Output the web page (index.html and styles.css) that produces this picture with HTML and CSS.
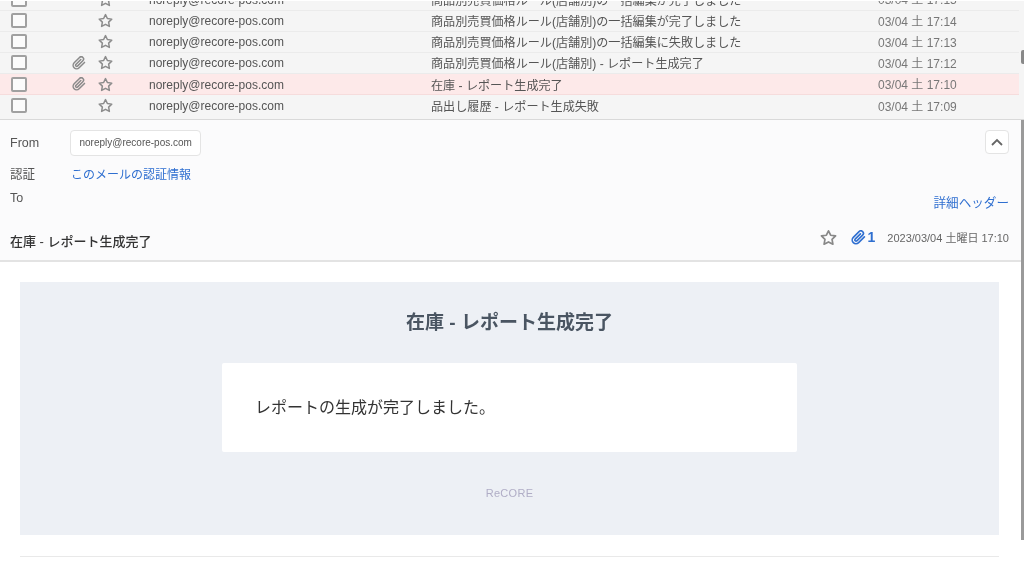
FILE: index.html
```html
<!DOCTYPE html>
<html lang="ja">
<head>
  <meta charset="UTF-8">
  <meta name="viewport" content="width=device-width, initial-scale=1.0">
  <title>Webmail</title>
  <link rel="stylesheet" href="styles.css">
</head>
<body>
  <svg class="sprites" width="0" height="0">
    <symbol id="star" viewBox="0 0 24 24">
      <polygon points="12 2.5 15 8.8 22 9.8 17 14.6 18.2 21.5 12 18.2 5.8 21.5 7 14.6 2 9.8 9 8.8" fill="none" stroke="currentColor" stroke-width="2.4" stroke-linejoin="round"/>
    </symbol>
    <symbol id="clip" viewBox="0 0 24 24">
      <path d="M21.4 11l-9.2 9.2a6 6 0 0 1-8.5-8.5l9.2-9.2a4 4 0 0 1 5.7 5.7l-9.2 9.2a2 2 0 0 1-2.8-2.8l8.5-8.5" fill="none" stroke="currentColor" stroke-width="2.6" stroke-linecap="round" stroke-linejoin="round"/>
    </symbol>
  </svg>

  <div class="page">
    <div class="mail-list">
      <div class="row row-cut">
        <span class="check"></span>
        <span class="clip-cell"></span>
        <svg class="star"><use href="#star"/></svg>
        <span class="sender">noreply@recore-pos.com</span>
        <span class="subject">商品別売買価格ルール(店舗別)の一括編集が完了しました</span>
        <span class="date">03/04 土 17:15</span>
      </div>
      <div class="row">
        <span class="check"></span>
        <span class="clip-cell"></span>
        <svg class="star"><use href="#star"/></svg>
        <span class="sender">noreply@recore-pos.com</span>
        <span class="subject">商品別売買価格ルール(店舗別)の一括編集が完了しました</span>
        <span class="date">03/04 土 17:14</span>
      </div>
      <div class="row">
        <span class="check"></span>
        <span class="clip-cell"></span>
        <svg class="star"><use href="#star"/></svg>
        <span class="sender">noreply@recore-pos.com</span>
        <span class="subject">商品別売買価格ルール(店舗別)の一括編集に失敗しました</span>
        <span class="date">03/04 土 17:13</span>
      </div>
      <div class="row">
        <span class="check"></span>
        <span class="clip-cell"><svg class="clip"><use href="#clip"/></svg></span>
        <svg class="star"><use href="#star"/></svg>
        <span class="sender">noreply@recore-pos.com</span>
        <span class="subject">商品別売買価格ルール(店舗別) - レポート生成完了</span>
        <span class="date">03/04 土 17:12</span>
      </div>
      <div class="row row-active">
        <span class="check"></span>
        <span class="clip-cell"><svg class="clip"><use href="#clip"/></svg></span>
        <svg class="star"><use href="#star"/></svg>
        <span class="sender">noreply@recore-pos.com</span>
        <span class="subject">在庫 - レポート生成完了</span>
        <span class="date">03/04 土 17:10</span>
      </div>
      <div class="row row-last">
        <span class="check"></span>
        <span class="clip-cell"></span>
        <svg class="star"><use href="#star"/></svg>
        <span class="sender">noreply@recore-pos.com</span>
        <span class="subject">品出し履歴 - レポート生成失敗</span>
        <span class="date">03/04 土 17:09</span>
      </div>
      <div class="list-thumb"></div>
    </div>

    <div class="mail-head">
      <div class="head-top">
        <div class="meta">
          <span class="label">From</span>
          <span class="pill">noreply@recore-pos.com</span>
          <span class="label">認証</span>
          <a class="link" href="#">このメールの認証情報</a>
          <span class="label">To</span>
          <span></span>
        </div>
        <div class="head-tools">
          <button class="collapse" type="button">
            <svg width="14" height="9" viewBox="0 0 14 9"><path d="M2 7l5-5 5 5" fill="none" stroke="#666" stroke-width="1.8"/></svg>
          </button>
          <a class="link detail" href="#">詳細ヘッダー</a>
        </div>
      </div>
      <div class="head-bottom">
        <span class="head-subject">在庫 - レポート生成完了</span>
        <svg class="head-star"><use href="#star"/></svg>
        <svg class="head-clip"><use href="#clip"/></svg>
        <span class="clip-count">1</span>
        <span class="head-date">2023/03/04 土曜日 17:10</span>
      </div>
    </div>

    <div class="mail-body">
      <div class="notice">
        <h1 class="notice-title">在庫 - レポート生成完了</h1>
        <div class="notice-box">レポートの生成が完了しました。</div>
        <div class="notice-foot">ReCORE</div>
      </div>
      <hr class="body-rule">
    </div>
    <div class="page-scroll"></div>
  </div>
</body>
</html>
```

FILE: styles.css
```css
* {
  box-sizing: border-box;
}
html, body {
  margin: 0;
  padding: 0;
  height: 100%;
  overflow: hidden;
  background: #fff;
}
body {
  font-family: "Liberation Sans", "Noto Sans CJK JP", sans-serif;
  font-size: 12px;
  color: #444;
}
.sprites {
  position: absolute;
}
.page {
  position: relative;
  height: 567px;
  overflow: hidden;
  filter: blur(0.5px);
}

/* mail list */
.mail-list {
  position: relative;
  height: 120px;
  overflow: hidden;
  background: #f5f5f5;
  border-top: 1px solid #fff;
  border-bottom: 1px solid #d9d9d9;
  padding-right: 5px;
}
.row {
  display: grid;
  grid-template-columns: 11px 16px 71px 15px 36px 282px 447px auto;
  align-items: center;
  height: 21.2px;
  border-bottom: 1px solid #ebebeb;
  color: #555;
}
.row-cut {
  margin-top: -11.7px;
}
.row-active {
  background: #fde9e9;
  border-bottom-color: #f6dcdc;
}
.row-last {
  border-bottom: none;
}
.check {
  grid-column: 2;
  width: 16px;
  height: 15px;
  background: #fbfbfb;
  border: 2px solid #a0a0a0;
  border-radius: 2px;
}
.clip-cell {
  grid-column: 3;
  display: flex;
  justify-content: flex-end;
  padding-right: 12px;
}
.clip {
  width: 14px;
  height: 14px;
  color: #8a8a8a;
}
.star {
  grid-column: 4;
  width: 15px;
  height: 15px;
  color: #8c8c8c;
}
.sender {
  grid-column: 6;
  padding-top: 1px;
}
.subject {
  grid-column: 7;
  white-space: nowrap;
  font-size: 12.1px;
}
.date {
  grid-column: 8;
  padding-bottom: 1px;
  color: #777;
}
.list-thumb {
  position: absolute;
  top: 49px;
  right: 0;
  width: 3px;
  height: 14px;
  background: #888;
  border-radius: 2px 0 0 2px;
}

/* mail header */
.mail-head {
  height: 142px;
  background: #fbfbfc;
  border-bottom: 2px solid #e3e3e3;
  padding: 10px 15px 0 10px;
  display: flex;
  flex-direction: column;
}
.head-top {
  display: flex;
  justify-content: space-between;
  height: 92px;
}
.meta {
  display: grid;
  grid-template-columns: 60px auto;
  grid-template-rows: 26px 34px 16px;
  justify-items: start;
  align-items: center;
  align-content: start;
}
.label {
  font-size: 12.5px;
  color: #555;
}
.pill {
  height: 26px;
  line-height: 24px;
  padding: 0 8.5px;
  font-size: 10px;
  color: #555;
  background: #fff;
  border: 1px solid #e4e4e4;
  border-radius: 4px;
}
.link {
  color: #2f6fd0;
  text-decoration: none;
  padding-left: 1px;
}
.head-tools {
  display: flex;
  flex-direction: column;
  align-items: flex-end;
  justify-content: space-between;
  padding-bottom: 11px;
}
.collapse {
  display: flex;
  align-items: center;
  justify-content: center;
  width: 24px;
  height: 24px;
  padding: 0;
  background: #fff;
  border: 1px solid #e4e4e4;
  border-radius: 4px;
}
.detail {
  font-size: 12.6px;
}
.head-bottom {
  display: flex;
  align-items: center;
  height: 30px;
}
.head-subject {
  flex: 1;
  padding-top: 6px;
  font-size: 13px;
  font-weight: 500;
  color: #333;
}
.head-star {
  width: 17px;
  height: 17px;
  color: #888;
  margin-right: 14px;
}
.head-clip {
  width: 15px;
  height: 15px;
  color: #2f6fd0;
}
.clip-count {
  margin: 0 12px 0 2px;
  font-weight: 700;
  font-size: 14px;
  color: #2f6fd0;
}
.head-date {
  font-size: 11px;
  color: #666;
}

/* mail body */
.mail-body {
  padding: 20px 25px 0 20px;
}
.notice {
  height: 253px;
  background: #edf0f5;
  padding-top: 28px;
}
.notice-title {
  margin: 0;
  height: 53px;
  text-align: center;
  font-size: 19px;
  line-height: 26px;
  font-weight: 700;
  color: #4a5562;
}
.notice-box {
  width: 575px;
  height: 89px;
  margin: 0 auto;
  padding-left: 33px;
  line-height: 90px;
  font-size: 16px;
  color: #333;
  background: #fff;
  border-radius: 2px;
}
.notice-foot {
  margin-top: 35px;
  text-align: center;
  font-size: 11px;
  letter-spacing: 0.3px;
  color: #b0adc6;
}
.body-rule {
  height: 1px;
  margin: 21px 0 0;
  border: none;
  background: #e9e9e9;
}
.page-scroll {
  position: absolute;
  top: 120px;
  right: 0;
  width: 3px;
  height: 420px;
  background: #9a9a9a;
}
```
